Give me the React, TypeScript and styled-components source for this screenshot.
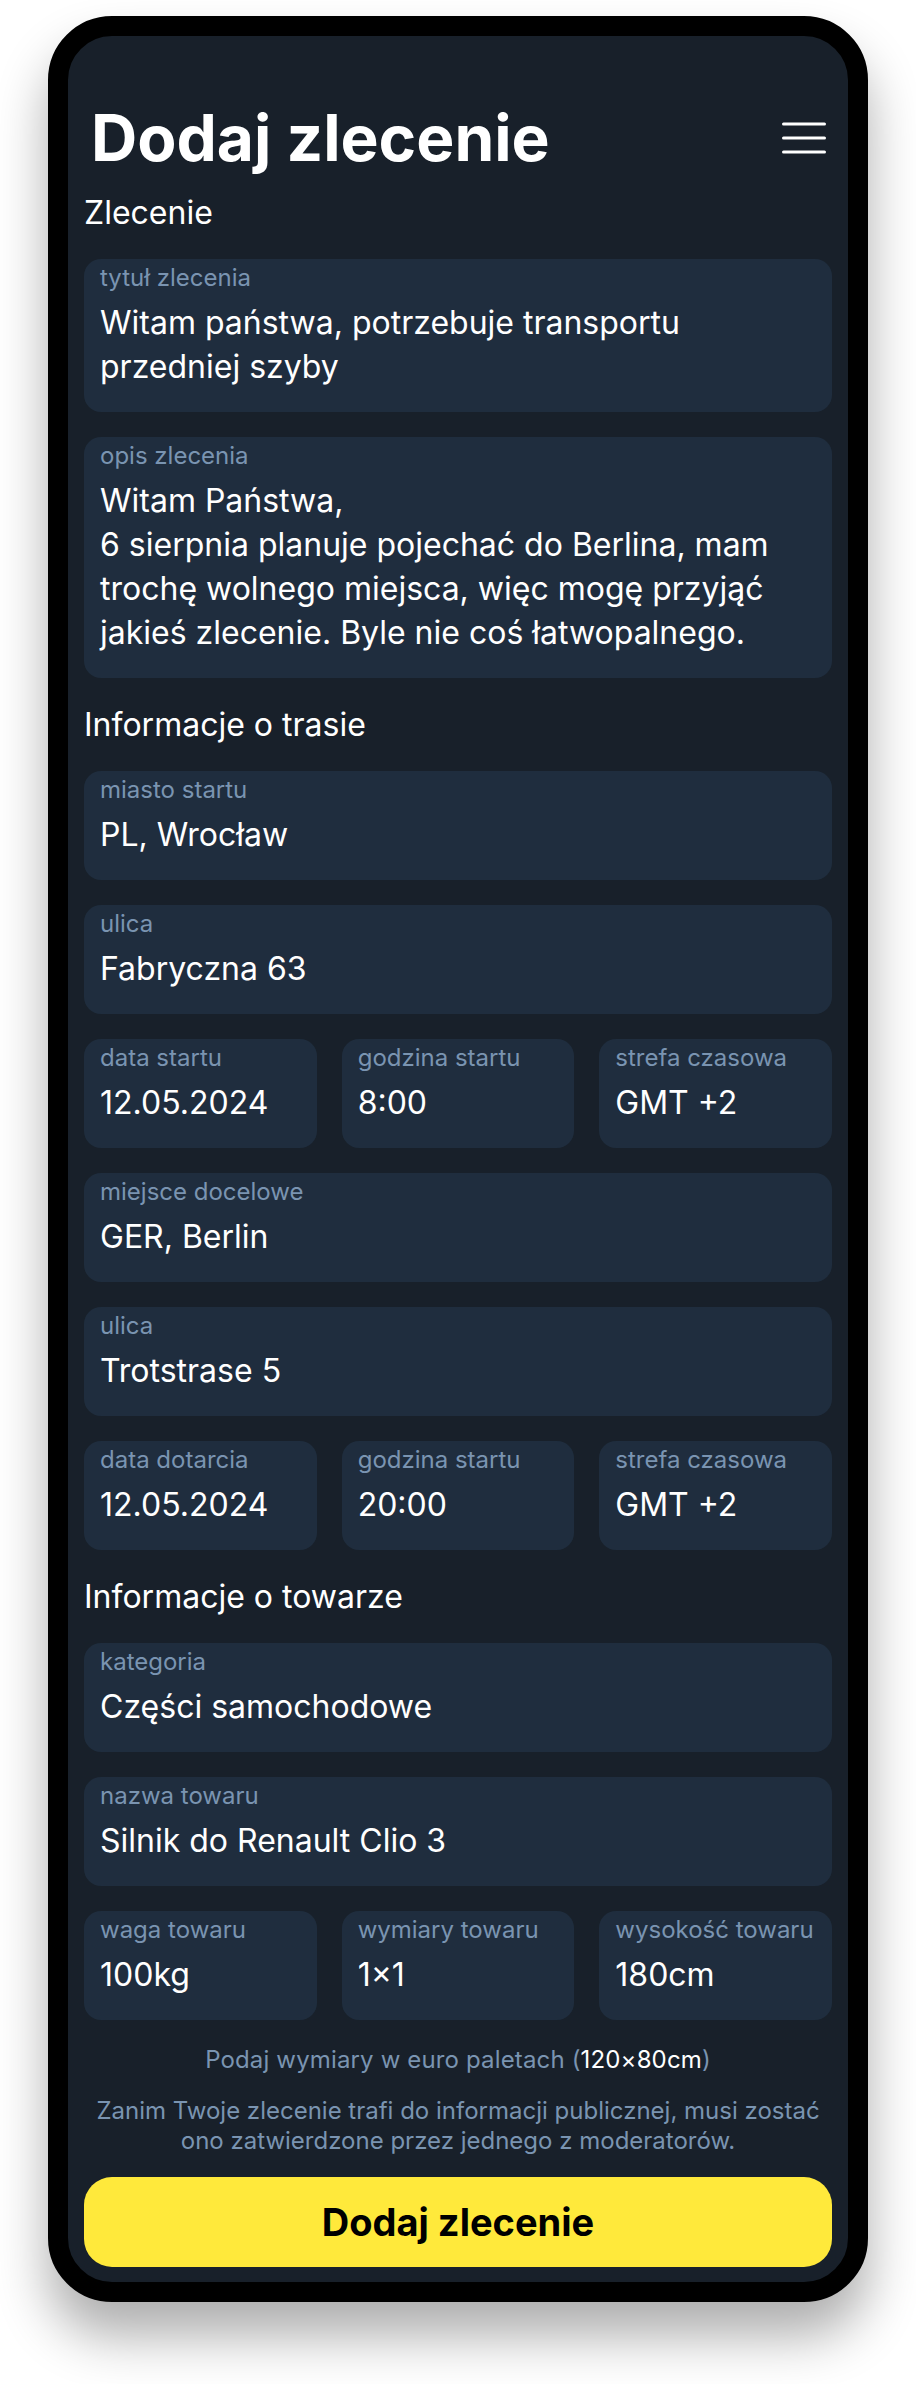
import React from "react";
import styled, { createGlobalStyle } from "styled-components";

const GlobalStyle = createGlobalStyle`
  html, body {
    margin: 0;
    padding: 0;
    background: #ffffff;
  }
  body {
    font-family: Inter, "Noto Sans", "Liberation Sans", sans-serif;
    -webkit-font-smoothing: antialiased;
  }
  * { box-sizing: border-box; }
`;

const Page = styled.div`
  width: 916px;
  min-height: 2384px;
  padding-top: 16px;
  display: flex;
  justify-content: center;
  align-items: flex-start;
  background: #ffffff;
  overflow: hidden;
`;

const Phone = styled.div`
  width: 820px;
  border: 20px solid #000000;
  border-radius: 64px;
  background: #18202a;
  box-shadow: 0 34px 52px rgba(0, 0, 0, 0.32);
  overflow: hidden;
`;

const Screen = styled.main`
  display: flex;
  flex-direction: column;
  gap: 25px;
  padding: 73px 16px 15px;
`;

const TitleRow = styled.header`
  display: flex;
  align-items: center;
  justify-content: space-between;
  padding: 0 6px 0 7px;
`;

const Title = styled.h1`
  margin: 0;
  font-size: 64px;
  line-height: 57px;
  font-weight: 700;
  color: #ffffff;
  letter-spacing: 0;
`;

const MenuButton = styled.button`
  display: flex;
  padding: 0;
  border: 0;
  background: transparent;
  cursor: pointer;
`;

const SectionTitle = styled.h2`
  margin: 0;
  font-size: 32px;
  line-height: 43px;
  font-weight: 400;
  color: #ffffff;
`;

const Card = styled.div`
  display: flex;
  flex-direction: column;
  gap: 8px;
  padding: 4px 16px 23px;
  background: #1f2d3e;
  border-radius: 17px;
  min-width: 0;
`;

const Label = styled.span`
  font-size: 24px;
  line-height: 30px;
  color: #7a94b1;
  white-space: nowrap;
`;

const Value = styled.span`
  font-size: 32px;
  line-height: 44px;
  color: #ffffff;
  white-space: pre-line;
`;

const Row = styled.div`
  display: grid;
  grid-template-columns: repeat(3, 1fr);
  gap: 25px;
`;

const Footer = styled.div`
  display: flex;
  flex-direction: column;
  gap: 21px;
`;

const Note = styled.p<{ $spacing?: number }>`
  margin: 0;
  font-size: 24px;
  line-height: 30px;
  color: #7a94b1;
  text-align: center;
  letter-spacing: ${(p) => p.$spacing ?? 0}px;
`;

const Strong = styled.span`
  color: #ffffff;
`;

const SubmitButton = styled.button`
  height: 90px;
  border: 0;
  border-radius: 28px;
  background: #ffe93b;
  color: #000000;
  font-family: Inter, "Noto Sans", "Liberation Sans", sans-serif;
  font-size: 38px;
  font-weight: 700;
  cursor: pointer;
`;

type Field = { label: string; value: string };

const Hamburger = () => (
  <svg width="44" height="32" viewBox="0 0 44 32" fill="none">
    <g stroke="#ffffff" strokeWidth="3" strokeLinecap="round">
      <line x1="1.5" y1="2" x2="42.5" y2="2" />
      <line x1="1.5" y1="16" x2="42.5" y2="16" />
      <line x1="1.5" y1="30" x2="42.5" y2="30" />
    </g>
  </svg>
);

const FieldCard = ({ label, value }: Field) => (
  <Card>
    <Label>{label}</Label>
    <Value>{value}</Value>
  </Card>
);

const FieldRow = ({ fields }: { fields: Field[] }) => (
  <Row>
    {fields.map((f) => (
      <FieldCard key={f.label + f.value} {...f} />
    ))}
  </Row>
);

export default function App() {
  return (
    <>
      <GlobalStyle />
      <Page>
        <Phone>
          <Screen>
            <TitleRow>
              <Title>Dodaj zlecenie</Title>
              <MenuButton aria-label="menu">
                <Hamburger />
              </MenuButton>
            </TitleRow>

            <SectionTitle>Zlecenie</SectionTitle>
            <FieldCard
              label="tytuł zlecenia"
              value="Witam państwa, potrzebuje transportu przedniej szyby"
            />
            <FieldCard
              label="opis zlecenia"
              value={
                "Witam Państwa,\n6 sierpnia planuje pojechać do Berlina, mam trochę wolnego miejsca, więc mogę przyjąć jakieś zlecenie. Byle nie coś łatwopalnego."
              }
            />

            <SectionTitle>Informacje o trasie</SectionTitle>
            <FieldCard label="miasto startu" value="PL, Wrocław" />
            <FieldCard label="ulica" value="Fabryczna 63" />
            <FieldRow
              fields={[
                { label: "data startu", value: "12.05.2024" },
                { label: "godzina startu", value: "8:00" },
                { label: "strefa czasowa", value: "GMT +2" },
              ]}
            />
            <FieldCard label="miejsce docelowe" value="GER, Berlin" />
            <FieldCard label="ulica" value="Trotstrase 5" />
            <FieldRow
              fields={[
                { label: "data dotarcia", value: "12.05.2024" },
                { label: "godzina startu", value: "20:00" },
                { label: "strefa czasowa", value: "GMT +2" },
              ]}
            />

            <SectionTitle>Informacje o towarze</SectionTitle>
            <FieldCard label="kategoria" value="Części samochodowe" />
            <FieldCard label="nazwa towaru" value="Silnik do Renault Clio 3" />
            <FieldRow
              fields={[
                { label: "waga towaru", value: "100kg" },
                { label: "wymiary towaru", value: "1×1" },
                { label: "wysokość towaru", value: "180cm" },
              ]}
            />

            <Footer>
              <Note $spacing={0.15}>
                Podaj wymiary w euro paletach (<Strong>120×80cm</Strong>)
              </Note>
              <Note>
                Zanim Twoje zlecenie trafi do informacji publicznej, musi zostać
                ono zatwierdzone przez jednego z moderatorów.
              </Note>
              <SubmitButton>Dodaj zlecenie</SubmitButton>
            </Footer>
          </Screen>
        </Phone>
      </Page>
    </>
  );
}
